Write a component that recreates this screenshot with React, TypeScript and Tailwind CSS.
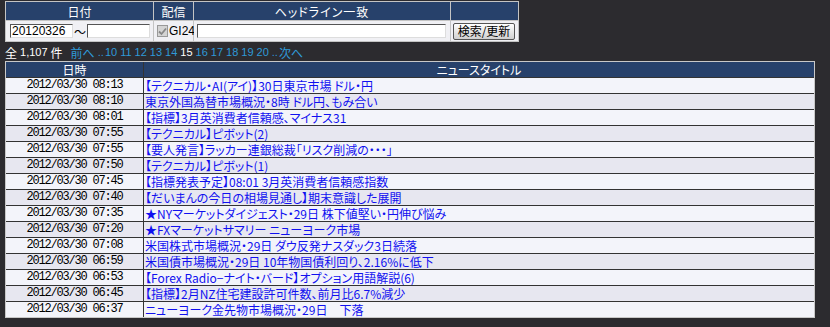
// ニュース一覧: 検索フォーム + ページ送り + 見出しテーブル
const news: [string, string][] = [
  ["2012/03/30 08:13", "【テクニカル・AI(アイ)】30日東京市場 ドル・円"],
  ["2012/03/30 08:10", "東京外国為替市場概況・8時 ドル円、もみ合い"],
  ["2012/03/30 08:01", "【指標】3月英消費者信頼感、マイナス31"],
  ["2012/03/30 07:55", "【テクニカル】ピボット(2)"],
  ["2012/03/30 07:55", "【要人発言】ラッカー連銀総裁「リスク削減の・・・」"],
  ["2012/03/30 07:50", "【テクニカル】ピボット(1)"],
  ["2012/03/30 07:45", "【指標発表予定】08:01 3月英消費者信頼感指数"],
  ["2012/03/30 07:40", "【だいまんの今日の相場見通し】期末意識した展開"],
  ["2012/03/30 07:35", "★NYマーケットダイジェスト・29日 株下値堅い・円伸び悩み"],
  ["2012/03/30 07:20", "★FXマーケットサマリー ニューヨーク市場"],
  ["2012/03/30 07:08", "米国株式市場概況・29日 ダウ反発ナスダック3日続落"],
  ["2012/03/30 06:59", "米国債市場概況・29日 10年物国債利回り、2.16%に低下"],
  ["2012/03/30 06:53", "【Forex Radio−ナイト・バード】オプション用語解説(6)"],
  ["2012/03/30 06:45", "【指標】2月NZ住宅建設許可件数、前月比6.7%減少"],
  ["2012/03/30 06:37", "ニューヨーク金先物市場概況・29日　下落"],
];

const pages = ["10", "11", "12", "13", "14", "15", "16", "17", "18", "19", "20"];

export default function App() {
  return (
    <div className="h-[327px] w-[830px] bg-[#2c2b2f] text-[12px] leading-[15px] [font-family:'Noto_Sans_CJK_JP',sans-serif] [font-feature-settings:'palt']">
      {/* 検索フォーム */}
      <div className="pl-[5px] pt-[1px]">
        <div className="grid w-[514px] grid-cols-[147px_1px_39px_1px_256px_1px_67px] border border-[#c4c4c4] bg-[#c4c4c4]">
          <div className="flex h-[18px] items-center justify-center bg-[#27416b] text-white">日付</div>
          <div />
          <div className="flex h-[18px] items-center justify-center bg-[#27416b] text-white">配信</div>
          <div />
          <div className="flex h-[18px] items-center justify-center bg-[#27416b] tracking-[1px] text-white">ヘッドライン一致</div>
          <div />
          <div className="h-[18px] bg-[#27416b]" />

          <div className="col-span-7 h-[1px]" />

          <div className="flex h-[20px] items-center bg-[#f0f0f4] pl-[4px]">
            <input
              defaultValue="20120326"
              className="h-[14px] w-[63px] border border-[#555] border-r-[#ddd] border-b-[#ddd] bg-white px-[1px] text-[12px] leading-[12px] text-black outline-none [font-family:'Liberation_Sans',sans-serif]"
            />
            <span className="mx-[1px] text-black">〜</span>
            <input className="h-[14px] w-[63px] border border-[#555] border-r-[#ddd] border-b-[#ddd] bg-white outline-none" />
          </div>
          <div />
          <div className="flex h-[20px] items-center gap-[1px] bg-[#f0f0f4] pl-[3px] text-black">
            <span className="flex h-[12px] w-[12px] items-center justify-center border border-[#999] bg-[#d4d4d4]">
              <svg width="9" height="9" viewBox="0 0 9 9">
                <path d="M1 4.5 L3.5 7 L8 1.5" fill="none" stroke="#888" strokeWidth="1.8" />
              </svg>
            </span>
            <span className="text-[12px] [font-family:'Liberation_Sans',sans-serif]">GI24</span>
          </div>
          <div />
          <div className="flex h-[20px] items-center bg-[#f0f0f4] pl-[3px]">
            <input className="h-[14px] w-[249px] border border-[#555] border-r-[#ddd] border-b-[#ddd] bg-white outline-none" />
          </div>
          <div />
          <div className="flex h-[20px] items-center bg-[#f0f0f4] pl-[2px]">
            <button className="h-[17px] w-[62px] rounded-[2px] border border-[#555] bg-gradient-to-b from-[#ffffff] to-[#d0d0d0] text-[12px] leading-[14px] text-black">
              検索/更新
            </button>
          </div>
        </div>
      </div>

      {/* ページ送り */}
      <div className="flex h-[19px] items-end pb-[1px] pl-[5px] text-white">
        <span>全</span>
        <span className="ml-[3px] text-[11px] [font-family:'Liberation_Sans',sans-serif]">1,107</span>
        <span className="ml-[3px]">件</span>
        <span className="ml-[8px] text-[#2f9ad8]">前へ</span>
        <div className="ml-[3px] flex gap-[3px] text-[11px] [font-family:'Liberation_Sans',sans-serif]">
          <span className="-mr-[2px] text-[#2f9ad8]">..</span>
          {pages.map((p) => (
            <span key={p} className={p === "15" ? "text-white" : "text-[#2f9ad8]"}>
              {p}
            </span>
          ))}
          <span className="text-[#2f9ad8]">..</span>
        </div>
        <span className="ml-[1px] text-[#2f9ad8]">次へ</span>
      </div>

      {/* ニュース一覧 */}
      <div className="pl-[5px]">
        <div className="w-[810px] border border-[#c8c8c8] bg-[#333]">
          <div className="grid grid-cols-[137px_1fr] gap-x-[1px] border-b border-[#333]">
            <div className="flex h-[15px] items-center justify-center bg-[#27416b] text-white">日時</div>
            <div className="flex h-[15px] items-center justify-center bg-[#27416b] text-white">ニュースタイトル</div>
          </div>
          {news.map(([d, t], i) => (
            <div
              key={i}
              className={`grid grid-cols-[137px_1fr] gap-x-[1px] ${i < news.length - 1 ? "border-b border-[#333]" : ""}`}
            >
              <div
                className={`flex h-[15px] items-center justify-center text-[12px] tracking-[-1.2px] text-black [font-family:'Liberation_Mono',monospace] ${
                  i % 2 === 0 ? "bg-[#f3f4fa]" : "bg-[#e7e7f0]"
                }`}
              >
                {d}
              </div>
              <div
                className={`flex h-[15px] items-center overflow-hidden whitespace-nowrap pl-[1px] text-[#1010f0] ${
                  i % 2 === 0 ? "bg-[#f3f4fa]" : "bg-[#e7e7f0]"
                }`}
              >
                {t}
              </div>
            </div>
          ))}
        </div>
      </div>
    </div>
  );
}
